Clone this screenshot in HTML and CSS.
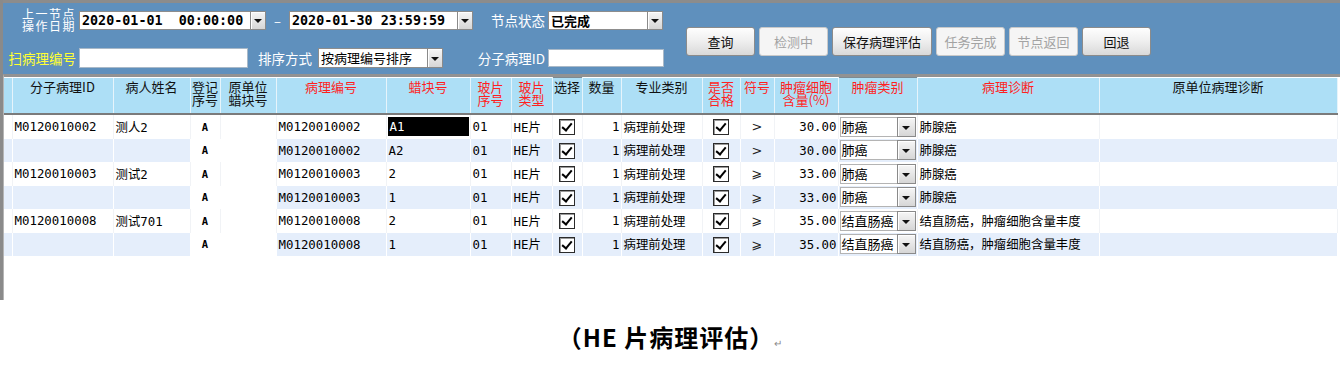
FILE: index.html
```html
<!DOCTYPE html>
<html lang="zh-CN">
<head>
    <meta charset="UTF-8">
    <meta name="viewport" content="width=device-width, initial-scale=1.0">
    <title>HE片病理评估</title>
    <link rel="stylesheet" href="styles.css">
</head>
<body>

    <div class="frame">
        <!-- Query bar -->
        <div class="toolbar">
            <div class="filters">
                <div class="frow row1">
                    <span class="lbl lbl-two">上一节点<br>操作日期</span>
                    <div class="combo date-from">
                        <span class="combo-text date">2020-01-01  00:00:00</span><span class="combo-btn"></span>
                    </div>
                    <span class="dash">–</span>
                    <div class="combo date-to">
                        <span class="combo-text date">2020-01-30 23:59:59</span><span class="combo-btn"></span>
                    </div>
                    <span class="lbl lbl-status">节点状态</span>
                    <div class="combo status">
                        <span class="combo-text strong">已完成</span><span class="combo-btn"></span>
                    </div>
                </div>
                <div class="frow row2">
                    <span class="lbl lbl-scan">扫病理编号</span>
                    <span class="field scan"></span>
                    <span class="lbl lbl-sort">排序方式</span>
                    <div class="combo sort">
                        <span class="combo-text">按病理编号排序</span><span class="combo-btn"></span>
                    </div>
                    <span class="lbl lbl-mid">分子病理ID</span>
                    <span class="field mid"></span>
                </div>
            </div>
            <div class="buttons">
                <button class="btn">查询</button>
                <button class="btn" disabled>检测中</button>
                <button class="btn wide">保存病理评估</button>
                <button class="btn" disabled>任务完成</button>
                <button class="btn" disabled>节点返回</button>
                <button class="btn">回退</button>
            </div>
        </div>

        <!-- Data grid -->
        <div class="grid-wrap">
            <table class="grid">
                <colgroup>
                    <col class="c0"><col class="c1"><col class="c2"><col class="c3"><col class="c4">
                    <col class="c5"><col class="c6"><col class="c7"><col class="c8"><col class="c9">
                    <col class="c10"><col class="c11"><col class="c12"><col class="c13"><col class="c14">
                    <col class="c15"><col class="c16"><col class="c17">
                </colgroup>
                <thead>
                    <tr>
                        <th></th>
                        <th>分子病理ID</th>
                        <th>病人姓名</th>
                        <th>登记<br>序号</th>
                        <th>原单位<br>蜡块号</th>
                        <th class="req">病理编号</th>
                        <th class="req">蜡块号</th>
                        <th class="req">玻片<br>序号</th>
                        <th class="req">玻片<br>类型</th>
                        <th class="dark">选择</th>
                        <th>数量</th>
                        <th>专业类别</th>
                        <th class="req">是否<br>合格</th>
                        <th class="req">符号</th>
                        <th class="req">肿瘤细胞<br>含量(%)</th>
                        <th class="req dark">肿瘤类别</th>
                        <th class="req">病理诊断</th>
                        <th>原单位病理诊断</th>
                    </tr>
                </thead>
                <tbody>
                    <tr>
                        <td></td><td>M0120010002</td><td>测人2</td><td class="w ctr reg">A</td><td class="w"></td>
                        <td>M0120010002</td><td class="pad"><span class="editing">A1</span></td><td>01</td><td>HE片</td>
                        <td class="ctr"><span class="chk"></span></td><td class="num">1</td><td>病理前处理</td>
                        <td class="ctr"><span class="chk"></span></td><td class="ctr sym">&gt;</td><td class="num">30.00</td>
                        <td class="pad"><div class="cell-combo"><span class="cc-text">肺癌</span><span class="combo-btn"></span></div></td>
                        <td>肺腺癌</td><td></td>
                    </tr>
                    <tr class="alt">
                        <td></td><td></td><td></td><td class="w ctr reg">A</td><td class="w"></td>
                        <td>M0120010002</td><td>A2</td><td>01</td><td>HE片</td>
                        <td class="ctr"><span class="chk"></span></td><td class="num">1</td><td>病理前处理</td>
                        <td class="ctr"><span class="chk"></span></td><td class="ctr sym">&gt;</td><td class="num">30.00</td>
                        <td class="pad"><div class="cell-combo"><span class="cc-text">肺癌</span><span class="combo-btn"></span></div></td>
                        <td>肺腺癌</td><td></td>
                    </tr>
                    <tr>
                        <td></td><td>M0120010003</td><td>测试2</td><td class="w ctr reg">A</td><td class="w"></td>
                        <td>M0120010003</td><td>2</td><td>01</td><td>HE片</td>
                        <td class="ctr"><span class="chk"></span></td><td class="num">1</td><td>病理前处理</td>
                        <td class="ctr"><span class="chk"></span></td><td class="ctr sym">⩾</td><td class="num">33.00</td>
                        <td class="pad"><div class="cell-combo"><span class="cc-text">肺癌</span><span class="combo-btn"></span></div></td>
                        <td>肺腺癌</td><td></td>
                    </tr>
                    <tr class="alt">
                        <td></td><td></td><td></td><td class="w ctr reg">A</td><td class="w"></td>
                        <td>M0120010003</td><td>1</td><td>01</td><td>HE片</td>
                        <td class="ctr"><span class="chk"></span></td><td class="num">1</td><td>病理前处理</td>
                        <td class="ctr"><span class="chk"></span></td><td class="ctr sym">⩾</td><td class="num">33.00</td>
                        <td class="pad"><div class="cell-combo"><span class="cc-text">肺癌</span><span class="combo-btn"></span></div></td>
                        <td>肺腺癌</td><td></td>
                    </tr>
                    <tr>
                        <td></td><td>M0120010008</td><td>测试701</td><td class="w ctr reg">A</td><td class="w"></td>
                        <td>M0120010008</td><td>2</td><td>01</td><td>HE片</td>
                        <td class="ctr"><span class="chk"></span></td><td class="num">1</td><td>病理前处理</td>
                        <td class="ctr"><span class="chk"></span></td><td class="ctr sym">⩾</td><td class="num">35.00</td>
                        <td class="pad"><div class="cell-combo"><span class="cc-text">结直肠癌</span><span class="combo-btn"></span></div></td>
                        <td>结直肠癌，肿瘤细胞含量丰度</td><td></td>
                    </tr>
                    <tr class="alt">
                        <td></td><td></td><td></td><td class="w ctr reg">A</td><td class="w"></td>
                        <td>M0120010008</td><td>1</td><td>01</td><td>HE片</td>
                        <td class="ctr"><span class="chk"></span></td><td class="num">1</td><td>病理前处理</td>
                        <td class="ctr"><span class="chk"></span></td><td class="ctr sym">⩾</td><td class="num">35.00</td>
                        <td class="pad"><div class="cell-combo"><span class="cc-text">结直肠癌</span><span class="combo-btn"></span></div></td>
                        <td>结直肠癌，肿瘤细胞含量丰度</td><td></td>
                    </tr>
                </tbody>
            </table>
        </div>
    </div>

    <p class="caption">（HE 片病理评估）<span class="ret">↵</span></p>

</body>
</html>
```

FILE: styles.css
```css
body {
    margin: 0;
    padding: 0;
    background: #fff;
    font-family: "Noto Sans CJK SC", sans-serif;
    color: #000;
}
/* Outer window */
.frame {
    width: 1340px;
    box-sizing: border-box;
    border-left: 3px solid #8a8a8a;
}
/* Query bar */
.toolbar {
    display: flex;
    height: 74px;
    box-sizing: border-box;
    border-top: 3px solid #8c8c8c;
    background-color: #5f90bd;
}
.filters {
    width: 664px;
}
.frow {
    display: flex;
    align-items: center;
}
.row1 {
    margin-top: 5px;
    height: 24px;
}
.row2 {
    margin-top: 15px;
    height: 22px;
}
.lbl {
    color: #fff;
    font-size: 13.5px;
    line-height: 14px;
    text-align: right;
    white-space: nowrap;
}
.lbl-two {
    width: 73px;
    font-size: 12px;
    line-height: 12px;
    letter-spacing: 1.5px;
}
.lbl-status {
    width: 56px;
    margin-left: 16px;
}
.lbl-scan {
    width: 73px;
    color: #ffff33;
}
.lbl-sort {
    width: 55px;
    margin-left: 9px;
}
.lbl-mid {
    width: 71px;
    margin-left: 31px;
}
.dash {
    width: 23px;
    text-align: center;
    color: #fff;
    font-size: 13px;
}
/* Combo boxes */
.combo {
    display: flex;
    height: 19px;
    margin-left: 3px;
}
.combo-text {
    flex: 1;
    background: #fff;
    border: 1px solid #8d8d8d;
    border-right: none;
    font-size: 13px;
    line-height: 17px;
    padding-left: 2px;
    white-space: pre;
    overflow: hidden;
}
.combo-text.date {
    font-family: "DejaVu Sans Mono", monospace;
    font-weight: bold;
    font-size: 13.4px;
}
.combo-text.strong {
    font-weight: bold;
}
.combo-btn {
    position: relative;
    width: 16px;
    box-sizing: border-box;
    border: 1px solid #8a8a8a;
    background: linear-gradient(#f6f6f6, #d6d6d6);
    box-shadow: inset 1px 1px 0 #fff;
}
.combo-btn::after {
    content: "";
    position: absolute;
    left: 50%;
    top: 50%;
    margin-left: -4px;
    margin-top: -1px;
    border-left: 4px solid transparent;
    border-right: 4px solid transparent;
    border-top: 4px solid #111;
}
.date-from {
    width: 187px;
}
.date-to {
    width: 184px;
    margin-left: 0;
}
.status {
    width: 115px;
}
.sort {
    width: 125px;
    margin-left: 6px;
    height: 20px;
}
.field {
    display: block;
    margin-left: 3px;
    background: #fff;
    box-sizing: border-box;
    border: 1px solid #a9b9c8;
}
.scan {
    width: 169px;
    height: 20px;
}
.mid {
    width: 116px;
    height: 18px;
}
/* Action buttons */
.buttons {
    display: flex;
    gap: 4px;
    margin-left: 19px;
    margin-top: 24px;
    height: 29px;
}
.btn {
    width: 69px;
    height: 29px;
    padding: 0;
    font-family: "Noto Sans CJK SC", sans-serif;
    font-size: 13px;
    color: #111;
    border: 1px solid #8b8b8b;
    border-radius: 3px;
    background: linear-gradient(#fefefe, #f0f0f0 45%, #d9d9d9);
}
.btn.wide {
    width: 100px;
}
.btn:disabled {
    color: #a3a3a3;
    border-color: #c9c9c9;
    background: #f5f5f5;
}
/* Grid */
.grid-wrap {
    height: 226px;
    box-sizing: border-box;
    border-top: 3px solid #929292;
    border-left: 1px solid #b5b5b5;
    background: #fff;
}
.grid {
    table-layout: fixed;
    border-collapse: collapse;
    width: 1333px;
    font-size: 13px;
}
.c0 { width: 8px; }
.c1 { width: 101px; }
.c2 { width: 77px; }
.c3 { width: 30px; }
.c4 { width: 56px; }
.c5 { width: 110px; }
.c6 { width: 84px; }
.c7 { width: 41px; }
.c8 { width: 41px; }
.c9 { width: 30px; }
.c10 { width: 39px; }
.c11 { width: 81px; }
.c12 { width: 38px; }
.c13 { width: 34px; }
.c14 { width: 64px; }
.c15 { width: 79px; }
.c16 { width: 182px; }
.c17 { width: 238px; }
.grid th {
    height: 33px;
    padding: 2px 0 0;
    vertical-align: top;
    background-color: #addff6;
    border-right: 1px solid #e6f4fb;
    border-bottom: 2px solid #7b7b7b;
    font-weight: normal;
    font-size: 13px;
    line-height: 13px;
    color: #111;
    white-space: nowrap;
    overflow: hidden;
}
.grid th.req {
    color: #ff1f1f;
}
.grid th.dark {
    border-left: 1px solid #7d8a92;
    border-top: 1px solid #7d8a92;
}
.grid td {
    height: 23.5px;
    padding: 0 0 0 2px;
    border-right: 1px solid #f1f3f6;
    font-family: "DejaVu Sans Mono", "Noto Sans CJK SC", monospace;
    font-size: 12.4px;
    white-space: nowrap;
    overflow: hidden;
}
.grid tr.alt td {
    background-color: #e5eefb;
    border-right-color: #fff;
}
.grid td.w,
.grid tr.alt td.w {
    background-color: #fff;
}
.grid td.ctr {
    text-align: center;
    padding: 0;
}
.grid td.reg {
    font-size: 10.5px;
    font-weight: bold;
}
.grid td.num {
    text-align: right;
    padding: 0 1px 0 0;
}
.grid td.pad {
    padding: 0 1px;
}
.grid td.sym {
    font-family: "DejaVu Sans", sans-serif;
    font-size: 13px;
    color: #222;
}
.editing {
    display: block;
    height: 19px;
    line-height: 19px;
    padding-left: 2px;
    background: #000;
    color: #fff;
}
/* Checkbox */
.chk {
    position: relative;
    display: inline-block;
    width: 14px;
    height: 14px;
    vertical-align: middle;
    background: #fff;
    border: 1px solid #2b2b2b;
    box-shadow: inset 1px 1px 0 #9a9a9a;
}
.chk::after {
    content: "";
    position: absolute;
    left: 4px;
    top: 1px;
    width: 4px;
    height: 8px;
    border-right: 2.5px solid #000;
    border-bottom: 2.5px solid #000;
    transform: rotate(40deg);
}
/* In-cell combo */
.cell-combo {
    display: flex;
    height: 20px;
}
.cc-text {
    flex: 1;
    background: #fff;
    border: 1px solid #b4b4b4;
    border-right: none;
    font-family: "Noto Sans CJK SC", sans-serif;
    font-size: 13px;
    line-height: 18px;
    padding-left: 1px;
    overflow: hidden;
}
.cell-combo .combo-btn {
    width: 19px;
}
/* Figure caption */
.caption {
    margin: 21px 0 0;
    text-align: center;
    font-size: 24px;
    font-weight: bold;
    line-height: 32px;
    letter-spacing: 1px;
}
.caption .ret {
    font-size: 10px;
    font-weight: normal;
    letter-spacing: 0;
    color: #8a8a8a;
}
```
